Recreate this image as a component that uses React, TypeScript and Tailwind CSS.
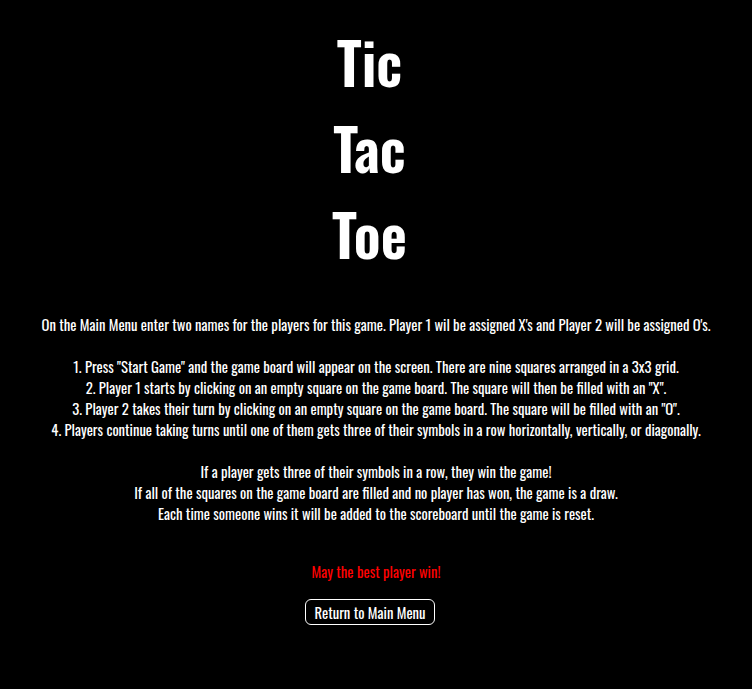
export default function App() {
  return (
    <div className="min-h-screen bg-black text-white text-center font-['Oswald',sans-serif] pt-[18px]">
      <h1 className="text-[57px] font-semibold leading-[86px] pr-[13px]">
        Tic
        <br />
        Tac
        <br />
        Toe
      </h1>
      <div className="text-[14.7px] font-normal leading-[21px] mt-[38px]">
        <p>On the Main Menu enter two names for the players for this game. Player 1 wil be assigned X's and Player 2 will be assigned O's.</p>
        <ol className="list-decimal list-inside mt-[21px]">
          <li>Press "Start Game" and the game board will appear on the screen. There are nine squares arranged in a 3x3 grid.</li>
          <li>Player 1 starts by clicking on an empty square on the game board. The square will then be filled with an "X".</li>
          <li>Player 2 takes their turn by clicking on an empty square on the game board. The square will be filled with an "O".</li>
          <li>Players continue taking turns until one of them gets three of their symbols in a row horizontally, vertically, or diagonally.</li>
        </ol>
        <p className="mt-[21px]">
          If a player gets three of their symbols in a row, they win the game!
          <br />
          If all of the squares on the game board are filled and no player has won, the game is a draw.
          <br />
          Each time someone wins it will be added to the scoreboard until the game is reset.
        </p>
        <p className="mt-[37px] text-[#ff0000]">May the best player win!</p>
        <button className="mt-[17px] mr-[12px] text-white text-[14.7px] leading-[21px] border border-white rounded-md px-[9px] py-[1.5px]">Return to Main Menu</button>
      </div>
    </div>
  )
}
